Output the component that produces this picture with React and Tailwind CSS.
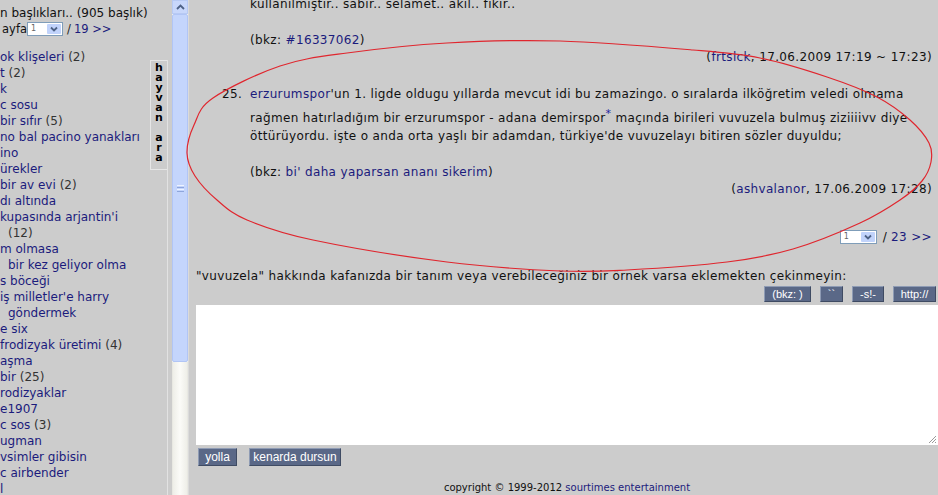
import React from "react";

const topics = [
  { t: "ok klişeleri", n: "(2)" },
  { t: "t", n: "(2)" },
  { t: "k" },
  { t: "c sosu" },
  { t: "bir sıfır", n: "(5)" },
  { t: "no bal pacino yanakları" },
  { t: "ino" },
  { t: "ürekler" },
  { t: "bir av evi", n: "(2)" },
  { t: "dı altında" },
  { t: "kupasında arjantin'i" },
  { t: "", n: "(12)", pad: true },
  { t: "m olmasa" },
  { t: "bir kez geliyor olma", pad: true },
  { t: "s böceği" },
  { t: "iş milletler'e harry" },
  { t: "göndermek", pad: true },
  { t: "e six" },
  { t: "frodizyak üretimi", n: "(4)" },
  { t: "aşma" },
  { t: "bir", n: "(25)" },
  { t: "rodizyaklar" },
  { t: "e1907" },
  { t: "c sos", n: "(3)" },
  { t: "ugman" },
  { t: "vsimler gibisin" },
  { t: "c airbender" },
  { t: "l" },
];

// hand drawn red ring, traced from the screenshot
const ring = [
  [447, 43], [560, 41], [693, 50], [760, 58], [827, 77], [877, 97], [910, 120],
  [929, 143], [931, 162], [922, 181], [900, 200], [860, 223], [793, 249],
  [727, 262], [627, 270], [560, 271], [447, 262], [313, 240], [247, 220],
  [217, 200], [195, 176], [187, 153], [194, 125], [213, 98], [280, 66], [347, 53],
];

function smoothPath(p) {
  const n = p.length;
  let d = `M ${p[0][0]} ${p[0][1]}`;
  for (let i = 0; i < n; i++) {
    const p0 = p[(i - 1 + n) % n];
    const p1 = p[i];
    const p2 = p[(i + 1) % n];
    const p3 = p[(i + 2) % n];
    const c1 = [p1[0] + (p2[0] - p0[0]) / 6, p1[1] + (p2[1] - p0[1]) / 6];
    const c2 = [p2[0] - (p3[0] - p1[0]) / 6, p2[1] - (p3[1] - p1[1]) / 6];
    d += ` C ${c1[0].toFixed(1)} ${c1[1].toFixed(1)} ${c2[0].toFixed(1)} ${c2[1].toFixed(1)} ${p2[0]} ${p2[1]}`;
  }
  return d;
}

function PageSelect({ className = "" }) {
  return (
    <span className={`inline-flex h-[14px] items-stretch border border-[#7f9db9] bg-white align-middle ${className}`}>
      <span className="flex-1 pl-[3px] text-[8px] leading-[12px] tracking-normal text-[#666]">1</span>
      <span className="m-px flex w-[14px] items-center justify-center rounded-[1px] bg-[#c1d3fb]">
        <svg width="8" height="6" viewBox="0 0 8 6">
          <path d="M1 1.5 L4 4.5 L7 1.5" fill="none" stroke="#4d6185" strokeWidth="1.8" />
        </svg>
      </span>
    </span>
  );
}

function Btn({ children, className = "" }) {
  return (
    <span
      className={`inline-flex items-center justify-center border border-[#8e9bb4] border-b-[#3f4b63] border-r-[#3f4b63] bg-[#5a6887] font-['Liberation_Sans',sans-serif] tracking-normal text-white ${className}`}
    >
      {children}
    </span>
  );
}

function Scrollbar() {
  return (
    <div className="flex w-[16px] flex-col bg-[#f3f3ee]">
      <div className="flex h-[14px] items-center justify-center border border-[#b7c9f3] bg-[#c8d7fb]">
        <svg width="9" height="6" viewBox="0 0 9 6">
          <path d="M1 5 L4.5 1.5 L8 5" fill="none" stroke="#4d6185" strokeWidth="1.8" />
        </svg>
      </div>
      <div className="flex h-[348px] items-center justify-center rounded-[2px] border border-[#b1c5f5] bg-[#c4d5fc]">
        <div className="flex flex-col gap-[1px]">
          <div className="h-px w-[7px] bg-[#eef3ff]" />
          <div className="h-px w-[7px] bg-[#8ea6dc]" />
          <div className="h-px w-[7px] bg-[#eef3ff]" />
          <div className="h-px w-[7px] bg-[#8ea6dc]" />
        </div>
      </div>
      <div className="flex-1 border-x border-[#e8e8e2] bg-gradient-to-r from-[#eeeee8] via-[#fbfbf8] to-[#eeeee8]" />
    </div>
  );
}

export default function App() {
  return (
    <div className="relative flex h-[495px] w-[938px] overflow-hidden bg-[#cccccc] font-['DejaVu_Sans',sans-serif] text-[12px] text-[#111]">
      {/* left frame: topic list */}
      <aside className="flex w-[172px]">
        <div className="w-[150px] whitespace-nowrap">
          <div className="mt-[5px] leading-[16px] text-[12px]">n başlıkları.. (905 başlık)</div>
          <div className="flex items-center leading-[16px] text-[11.5px]">
            <span className="w-[27px] overflow-hidden text-right">ayfa</span>
            <PageSelect className="w-[36px]" />
            <span className="ml-[4px] text-[#222]">/ </span>
            <span className="ml-[3px] text-[#1b1b7c]">19 &gt;&gt;</span>
          </div>
          <ul className="mt-[12px]">
            {topics.map((it, i) => (
              <li key={i} className={`leading-[16px] text-[#1b1b7c] ${it.pad ? "pl-[8px]" : ""}`}>
                {it.t}
                {it.n && <span className="text-[#333]">{it.t ? " " : ""}{it.n}</span>}
              </li>
            ))}
          </ul>
        </div>
        <div className="w-[18px] pt-[40px]">
          <div className="h-full border-r border-[#e2e2e2]">
            <div className="mt-[20px] flex h-[110px] flex-col items-center border-l border-t border-b border-[#e6e6e6] pt-[2px] text-[11px] font-bold leading-[10px] text-black">
              {"hayvan ara".split("").map((c, i) => (
                <span key={i} className="h-[10px]">{c === " " ? "\u00a0" : c}</span>
              ))}
            </div>
          </div>
        </div>
      </aside>

      <Scrollbar />

      {/* right frame: entries */}
      <main className="flex flex-1 flex-col border-l border-[#dadada] tracking-[0.35px]">
        <div className="-mt-[5px] pl-[61px] pr-[6px] leading-[18px]">
          <p>kullanılmıştır.. sabır.. selamet.. akıl.. fıkır..</p>
          <p className="mt-[18px]">
            (bkz: <span className="text-[#1b1b7c]">#16337062</span>)
          </p>
          <p className="text-right leading-[16px]">
            (<span className="text-[#1b1b7c]">frtslck</span>, 17.06.2009 17:19 ~ 17:23)
          </p>

          <div className="relative mt-[20px]">
            <span className="absolute -left-[28px] top-0">25.</span>
            <p>
              <span className="text-[#1b1b7c]">erzurumspor</span>'un 1. ligde oldugu yıllarda mevcut idi bu zamazingo. o
              sıralarda ilköğretim veledi olmama rağmen hatırladığım bir erzurumspor - adana demirspor
              <span className="relative -top-[5px] inline-block pt-[10px] text-[11px] leading-none text-[#2323a0]">*</span> maçında
              birileri vuvuzela bulmuş ziziiiivv diye öttürüyordu. işte o anda orta yaşlı bir adamdan, türkiye'de vuvuzelayı
              bitiren sözler duyuldu;
            </p>
            <p className="mt-[18px]">
              (bkz: <span className="text-[#1b1b7c]">bi' daha yaparsan ananı sikerim</span>)
            </p>
            <p className="text-right leading-[16px]">
              (<span className="text-[#1b1b7c]">ashvalanor</span>, 17.06.2009 17:28)
            </p>
          </div>

          <div className="mt-[31px] flex items-center justify-end text-[12px]">
            <PageSelect className="w-[37px]" />
            <span className="ml-[6px]">/</span>
            <span className="ml-[4px] text-[#1b1b7c]">23 &gt;&gt;</span>
          </div>
        </div>

        <div className="mt-[22px] pl-[7px]">
          <p className="leading-[16px]">"vuvuzela" hakkında kafanızda bir tanım veya verebileceğiniz bir örnek varsa eklemekten çekinmeyin:</p>
          <div className="mt-[2px] flex justify-end gap-[9px] pr-[2px]">
            <Btn className="h-[16px] w-[47px] text-[11px]">(bkz: )</Btn>
            <Btn className="h-[16px] w-[23px] text-[11px]">``</Btn>
            <Btn className="h-[16px] w-[32px] text-[11px]">-s!-</Btn>
            <Btn className="h-[16px] w-[43px] text-[11px]">http://</Btn>
          </div>
          <div className="relative mt-[3px] h-[140px] bg-white">
            <svg className="absolute bottom-[1px] right-[1px]" width="10" height="10" viewBox="0 0 10 10">
              <path d="M9 2 L2 9 M9 5 L5 9 M9 8 L8 9" stroke="#9a9a9a" strokeWidth="1" />
            </svg>
          </div>
          <div className="mt-[3px] flex gap-[12px] pl-[2px]">
            <Btn className="h-[18px] w-[39px] text-[12px]">yolla</Btn>
            <Btn className="h-[18px] w-[92px] text-[12px]">kenarda dursun</Btn>
          </div>
          <p className="mt-[16px] text-center text-[10px] leading-[12px] tracking-normal">
            copyright © 1999-2012 <span className="text-[#1b1b7c]">sourtimes entertainment</span>
          </p>
        </div>
      </main>

      {/* annotation drawn over the page */}
      <svg className="pointer-events-none absolute left-0 top-0" width="938" height="495">
        <path d={smoothPath(ring)} fill="none" stroke="#e0262e" strokeWidth="1.2" />
      </svg>
    </div>
  );
}
